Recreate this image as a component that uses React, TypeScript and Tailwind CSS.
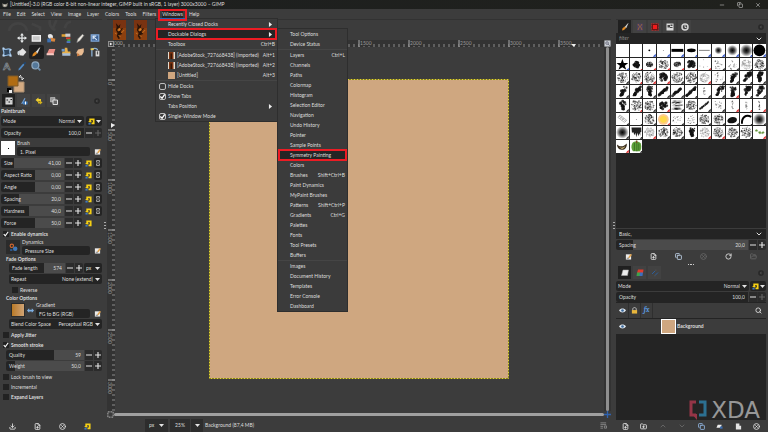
import { useState } from 'react';
import type { ReactNode } from 'react';
import {
  ChevronDown,
  ChevronUp,
  Copy,
  Download,
  FilePlus,
  FolderOpen,
  FolderPlus,
  Minus,
  RotateCw,
  Search,
  X,
  CircleX,
} from 'lucide-react';

interface ChildrenProps {
  children: ReactNode;
  className?: string;
}

function Icon({ children, className = 'size-[10px]' }: ChildrenProps) {
  return (
    <svg viewBox="0 0 16 16" className={`shrink-0 ${className}`} fill="none" aria-hidden="true">
      {children}
    </svg>
  );
}

function Caret() {
  return (
    <Icon className="size-[5px] pointer-events-none">
      <path d="M0 3h16l-8 10z" fill="#e4e4e4" />
    </Icon>
  );
}

function ResetIcon() {
  return (
    <Icon className="size-[7px]">
      <path d="M3 8V1h12v13H8v-4h3V5H7v3z" fill="#f5cf14" />
      <path d="M0 7h9l-4 4z" fill="#f5cf14" />
      <path d="M1 11h5v4H1z" fill="#3f78c0" />
    </Icon>
  );
}

function EditIcon() {
  return (
    <Icon className="size-[7px]">
      <path d="M2 3h12v12H2z" fill="#ececec" />
      <path d="M7 10l6-8 3 2-6 8z" fill="#e3a34a" />
      <path d="M4 12h5" stroke="#777" strokeWidth="2" />
    </Icon>
  );
}

function LinkIcon() {
  return (
    <Icon className="size-[8px]">
      <path d="M5 7V3h6v4M5 9v4h6V9M8 5v6" stroke="#9c9c9c" strokeWidth="2" />
    </Icon>
  );
}

function BrushIcon() {
  return (
    <>
      <path d="M14 1L8 8l2 2z" fill="#f3efe6" stroke="#ddd" />
      <path d="M7 7l3 3-4 4-4 1 1-4z" fill="#e08a24" />
    </>
  );
}

const tools: { name: string; art: ReactNode }[] = [
  { name: 'Pointer', art: null },
  {
    name: 'Move',
    art: (
      <path
        d="M8 0l3 4H9v3h3V5l4 3-4 3V9H9v3h2l-3 4-3-4h2V9H4v2L0 8l4-3v2h3V4H5z"
        fill="#e6e9ea"
      />
    ),
  },
  {
    name: 'Rectangle Select',
    art: <path d="M2 4h13v9H2z" fill="#c9c9c9" stroke="#f1f1f1" strokeWidth="2" />,
  },
  {
    name: 'Free Select',
    art: (
      <>
        <path d="M3 3c4-3 9 0 8 4S2 10 3 3z" fill="#e8e8e8" />
        <path d="M7 7l8 2-1 5-6-1z" fill="#d9863d" />
        <path d="M2 9h6v6H2z" fill="#3d70b0" />
      </>
    ),
  },
  {
    name: 'Fuzzy Select',
    art: (
      <>
        <path d="M1 2h9v4H1z" fill="#e0a030" />
        <path d="M7 1h8v5H7z" fill="#ccc" />
        <path d="M8 7h7v3H8z" fill="#d43c2c" />
        <path d="M10 10h5v3h-5z" fill="#46a046" />
        <path d="M9 13h6v3H9z" fill="#4d78c4" />
      </>
    ),
  },
  {
    name: 'Crop',
    art: <path d="M3 15l2-6 7-7 2 2-6 8z" fill="#eeeae0" stroke="#999" />,
  },
  {
    name: 'Transform',
    art: (
      <>
        <path d="M2 3h12v10H2z" fill="#3b5f91" stroke="#7ea6d8" strokeWidth="2" />
        <path d="M4 5l7 6M5 10V5h5" stroke="#d8e6f6" strokeWidth="2" />
      </>
    ),
  },
  {
    name: 'Warp',
    art: (
      <>
        <path d="M2 2c4 5 8-2 12 2-4 4 0 6 0 10-4-4-8 2-12-1 3-4-1-7 0-11z" fill="#31465c" stroke="#8bb4dc" strokeWidth="2" />
        <path d="M1 1h3v3H1zM12 3h3v3h-3zM1 12h3v3H1zM12 12h3v3h-3z" fill="#bed6ee" />
      </>
    ),
  },
  {
    name: 'Bucket Fill',
    art: (
      <>
        <path d="M3 7l6-5 6 6-5 6-6-1z" fill="#e4e4e4" />
        <path d="M1 7l4-2-2 8c-2 0-3-3-2-6z" fill="#cfd7de" />
      </>
    ),
  },
  { name: 'Paintbrush', art: <BrushIcon /> },
  {
    name: 'Eraser',
    art: (
      <>
        <path d="M5 3h10l-3 9H1z" fill="#eb8e86" />
        <path d="M1 10h11l1 3H1z" fill="#f7cbc4" />
      </>
    ),
  },
  {
    name: 'Clone',
    art: (
      <>
        <path d="M6 1h4l1 6h4v4H2V7h4z" fill="#e6b04c" />
        <path d="M2 10h13v4H2z" fill="#a9bfd8" />
        <path d="M1 3h5v4H1z" fill="#6d98c8" />
      </>
    ),
  },
  {
    name: 'Smudge',
    art: (
      <>
        <path d="M14 2L5 4 2 9l3 5 6-1 3-5z" fill="#e9bc92" />
        <path d="M4 9l4 4-5 2z" fill="#c9783c" />
      </>
    ),
  },
  {
    name: 'Paths',
    art: (
      <>
        <path d="M3 15V5c0-4 9-4 9 0" stroke="#8cb2d8" strokeWidth="2" />
        <path d="M9 6h6v9H9z" fill="#ddd" />
        <path d="M11 7h2v5h-2z" fill="#555" />
        <path d="M1 2h5v3H1z" fill="#e8cc5b" />
      </>
    ),
  },
  {
    name: 'Text',
    art: (
      <text x="2" y="14" fontSize="16" fontWeight="700" fill="#23282d" stroke="#9aa0a6">
        A
      </text>
    ),
  },
  {
    name: 'Color Picker',
    art: (
      <>
        <path d="M2 15l1-3 7-8 2 2-7 8z" fill="#5089c4" />
        <path d="M10 4l3-3 2 2-3 3z" fill="#20456e" />
      </>
    ),
  },
  {
    name: 'Zoom',
    art: (
      <>
        <circle cx="7" cy="7" r="5.5" fill="#54789a" stroke="#8faac2" strokeWidth="2" />
        <path d="M11 11l4 4" stroke="#6e8ca8" strokeWidth="3" />
      </>
    ),
  },
];

interface CheckProps {
  label: string;
  checked?: boolean;
  className?: string;
}

function Check({ label, checked = false, className = '' }: CheckProps) {
  const [on, setOn] = useState(checked);
  return (
    <label className={`flex h-[10px] items-center gap-0.5 ${className}`}>
      <span className="grid size-[6px]">
        <input
          type="checkbox"
          checked={on}
          onChange={e => setOn(e.target.checked)}
          className="col-start-1 row-start-1 size-[6px] appearance-none bg-[#222]"
        />
        {on && (
          <Icon className="col-start-1 row-start-1 size-[6px] pointer-events-none">
            <path d="M2 8l4 5 8-11" stroke="#fff" strokeWidth="3" />
          </Icon>
        )}
      </span>
      {label}
    </label>
  );
}

interface SpinProps {
  label: string;
  value: string;
  fill: number;
  maxed?: boolean;
}

function Spin({ label, value, fill, maxed }: SpinProps) {
  return (
    <div className="flex h-[10px] min-w-0 flex-1 overflow-hidden rounded-xs bg-[#2b2b2b]">
      <label className="relative flex min-w-0 flex-1 items-center bg-[#4b4b4b] px-[3px]">
        <span className="absolute inset-y-0 left-0 bg-[#242424]" style={{ width: `${fill}%` }} />
        <span className="relative whitespace-nowrap">{label}</span>
        <input
          defaultValue={value}
          className="relative w-full min-w-0 flex-1 bg-transparent text-right outline-none"
        />
      </label>
      <button
        type="button"
        aria-label={`Decrease ${label}`}
        className="grid w-[9px] place-items-center border-l border-[#3c3c3c]"
      >
        <Icon className="size-[6px]">
          <path d="M0 8h16" stroke="#e4e4e4" strokeWidth="3" />
        </Icon>
      </button>
      <button
        type="button"
        aria-label={`Increase ${label}`}
        disabled={maxed}
        className="grid w-[9px] place-items-center border-l border-[#3c3c3c] disabled:opacity-30"
      >
        <Icon className="size-[6px]">
          <path d="M0 8h16M8 0v16" stroke="#e4e4e4" strokeWidth="3" />
        </Icon>
      </button>
    </div>
  );
}

function Drop({ label, value }: { label: string; value: string }) {
  return (
    <label className="flex h-[10px] min-w-0 flex-1 items-center gap-0.5 rounded-xs bg-[#242424] px-0.5">
      <span className="whitespace-nowrap">{label}</span>
      <select className="min-w-0 flex-1 appearance-none bg-transparent outline-none [text-align-last:right]">
        <option>{value}</option>
      </select>
      <Caret />
    </label>
  );
}

function ResetMenu() {
  return (
    <button type="button" aria-label="Mode group" className="flex h-[10px] w-4 items-center justify-center gap-px rounded-xs bg-[#242424]">
      <ResetIcon />
      <Caret />
    </button>
  );
}

interface PickerProps {
  label: string;
  value: string;
  children: ReactNode;
  className?: string;
}

function Picker({ label, value, children, className = '' }: PickerProps) {
  return (
    <div className={`flex h-4 items-end gap-0.5 ${className}`}>
      {children}
      <label className="flex min-w-0 flex-1 flex-col">
        <span className="leading-[7px]">{label}</span>
        <input defaultValue={value} className="h-[9px] w-full rounded-xs bg-[#242424] px-[3px] outline-none" />
      </label>
      <button type="button" aria-label={`Edit ${label}`} className="grid h-[9px] w-[10px] place-items-center">
        <EditIcon />
      </button>
    </div>
  );
}

interface DockTab {
  name: string;
  art: ReactNode;
}

function DockTabs({ tabs }: { tabs: DockTab[] }) {
  return (
    <div role="tablist" className="flex h-[13px] shrink-0 items-center gap-0.5 px-0.5">
      {tabs.map((tab, i) => (
        <button
          key={tab.name}
          type="button"
          role="tab"
          aria-label={tab.name}
          aria-selected={i === 0}
          className={`grid h-[13px] w-[13px] place-items-center ${i === 0 ? 'bg-[#202020]' : 'bg-[#424242]'}`}
        >
          <Icon className="size-[8px]">{tab.art}</Icon>
        </button>
      ))}
      <button type="button" aria-label="Configure tab" className="ml-auto">
        <Icon className="size-[6px]">
          <circle cx="8" cy="8" r="7" fill="#2c2c2c" stroke="#242424" />
          <path d="M9 4L5 8l4 4z" fill="#555" />
        </Icon>
      </button>
    </div>
  );
}

const optionTabs: DockTab[] = [
  {
    name: 'Tool Options',
    art: (
      <>
        <path d="M1 1h14v14H1z" fill="#e8e8e8" />
        <path d="M4 3v10M8 3v10M12 3v10" stroke="#777" strokeWidth="1" />
        <path d="M3 5h3v2H3zM7 9h3v2H7zM11 4h3v2h-3z" fill="#222" />
      </>
    ),
  },
  {
    name: 'Device Status',
    art: (
      <>
        <path d="M2 14L9 2l2 1-5 10z" fill="#6f9cd0" />
        <path d="M6 9h9v6H6z" fill="#437ec0" />
        <path d="M11 9v6" stroke="#fff" strokeWidth="2" />
      </>
    ),
  },
  {
    name: 'Undo History',
    art: (
      <>
        <path d="M1 6l6-5v3h5v4H7v3z" fill="#f0cf2f" />
        <path d="M15 11l-5-4v2H6v4h4v2z" fill="#d5b31c" />
      </>
    ),
  },
  {
    name: 'Images',
    art: (
      <>
        <path d="M1 1h9v9H1z" fill="#999" stroke="#ddd" />
        <path d="M6 6h9v9H6z" fill="#666" stroke="#ddd" strokeWidth="2" />
      </>
    ),
  },
];

const brushTabs: DockTab[] = [
  { name: 'Brushes', art: <BrushIcon /> },
  {
    name: 'Patterns',
    art: (
      <>
        <path d="M2 1h12v14H2z" fill="#4b3f5c" />
        <path d="M4 2l3 5-3 7M12 2L9 7l3 7" stroke="#93653f" strokeWidth="2" />
      </>
    ),
  },
  {
    name: 'Gradients',
    art: (
      <>
        <path d="M1 1h14v14H1z" fill="#6b1414" stroke="#d43a3a" strokeDasharray="2 1" />
        <path d="M4 4h8v8H4z" fill="#ef1c1c" />
      </>
    ),
  },
  {
    name: 'Fonts',
    art: (
      <>
        <path d="M1 1h14v14H1z" fill="#dcdcdc" />
        <path d="M3 4h5v5H3zM8 8h5v2H8zM9 3h4v3H9z" fill="#444" />
      </>
    ),
  },
  {
    name: 'Document History',
    art: (
      <>
        <circle cx="8" cy="8" r="6" stroke="#d6d6d6" strokeWidth="3" />
        <path d="M8 4v5h3" stroke="#d6d6d6" strokeWidth="2" />
      </>
    ),
  },
];

const layerTabs: DockTab[] = [
  { name: 'Layers', art: <path d="M4 2h11l-2 11H1z" fill="#ececec" stroke="#aaa" /> },
  {
    name: 'Channels',
    art: (
      <>
        <path d="M4 1h11l-1 7H2z" fill="#e03a2c" />
        <path d="M2 7h7l-1 7H1z" fill="#3da34a" />
        <path d="M8 7h6l-1 7H7z" fill="#3c6fc0" />
      </>
    ),
  },
  {
    name: 'Paths',
    art: (
      <>
        <path d="M2 10L9 3M7 14l7-7" stroke="#2c5f9c" strokeWidth="2" />
        <path d="M8 1h3v3H8zM6 12h3v3H6z" fill="#4b4b4b" />
      </>
    ),
  },
];

/* ---------- brush grid ---------- */

// one letter per brush preview, one row per string
const brushRows = [
  '..oi-elpqPC',
  '*bctcBfssgt',
  'TtTBTTgsVVV',
  'VVVDDDyVVVV',
  'VTtBLtdsyyy',
  'Hit@sstt%aS',
  'SrgttVgttTm',
  'nG',
];

const cornerRows = [
  '..BBBBBBBBB',
  'BRRRRRRKKKK',
  'KRRRKKRKKKK',
  'KKKKKKKKRKK',
  'KRKRKKKKRRR',
  'KKKRKKKKKKK',
  'KKRKKKRRKKR',
  'RK',
];

function seeded(seed: number) {
  let s = seed * 7919 + 13;
  return () => {
    s = (s + 0x6d2b79f5) | 0;
    let t = Math.imul(s ^ (s >>> 15), 1 | s);
    t = (t + Math.imul(t ^ (t >>> 7), 61 | t)) ^ t;
    return ((t ^ (t >>> 14)) >>> 0) / 4294967296;
  };
}

function specks(kind: string, seed: number): ReactNode {
  const rnd = seeded(seed);
  const out: ReactNode[] = [];
  const solid = 'bBVD'.includes(kind);
  const flat = kind === 'L';
  const count = kind === 'f' ? 4 : kind === 's' ? 18 : kind === 'y' ? 16 : solid ? 30 : 110;
  for (let i = 0; i < count; i++) {
    const angle = rnd() * Math.PI * 2;
    const dist = Math.sqrt(rnd());
    const reach = kind === 'T' ? 11 : kind === 'b' ? 6 : kind === 'B' ? 8 : kind === 'c' ? 7 : 10;
    let x = 13 + Math.cos(angle) * dist * reach;
    let y = 13 + Math.sin(angle) * dist * (kind === 'c' ? 5 : reach);
    let r = 0.6 + rnd() * 0.8;
    if (solid) r = 1.2 + rnd() * 2;
    if (kind === 'V') {
      y = 3 + rnd() * 19;
      x = 14 + (rnd() - 0.5) * (y < 13 ? 11 : 4) - (y - 13) * (seed % 3) * 0.3;
    }
    if (kind === 'y') {
      y = 4 + rnd() * 18;
      x = 13 + (rnd() - 0.5) * 3;
    }
    if (kind === 'D' || kind === 'd') {
      const t = rnd();
      x = 3 + t * 19;
      y = 21 - t * 15 + (rnd() - 0.5) * 4;
    }
    if (flat) y = 4 + Math.floor(rnd() * 8) * 2.5;
    out.push(
      <ellipse
        key={i}
        cx={x}
        cy={y}
        rx={flat ? 3 : r}
        ry={flat ? 0.5 : r}
        fill="#111"
        opacity={kind === 'g' ? 0.2 : solid ? 0.8 : 0.5}
      />,
    );
  }
  return out;
}

function preview(kind: string, seed: number): ReactNode {
  switch (kind) {
    case '.':
      return null;
    case 'o':
      return <circle cx="13" cy="13" r="2" fill="#000" />;
    case 'i':
      return <circle cx="13" cy="13" r="1" fill="#333" />;
    case '-':
      return <path d="M1 10h24v6H1z" fill="#000" />;
    case 'e':
      return <ellipse cx="13" cy="13" rx="9" ry="4" fill="#000" />;
    case 'l':
      return <path d="M2 13h22" stroke="#000" />;
    case 'p':
      return <circle cx="13" cy="13" r="8" fill="url(#soft)" />;
    case 'q':
      return <circle cx="13" cy="13" r="11" fill="url(#soft)" />;
    case 'P':
    case 'S':
      return <circle cx="13" cy="13" r="13" fill="url(#soft)" />;
    case 'C':
      return <circle cx="13" cy="13" r="12" fill="#000" />;
    case '*':
      return <path d="M13 2l3 8 9 0-7 6 3 8-8-5-8 5 3-8-7-6 9 0z" fill="#000" />;
    case 'H':
      return (
        <path
          d="M4 9l13 10M6 6l14 11M8 4l14 11M4 9l4-5M8 12l4-5M12 15l4-5M17 19l5-4"
          stroke="#777"
          strokeWidth="1"
        />
      );
    case '@':
      return (
        <>
          <circle cx="13" cy="13" r="11" fill="#ffb35c" opacity="0.7" />
          <circle cx="13" cy="13" r="7" fill="#ffd84a" />
        </>
      );
    case '%':
      return <path d="M3 15c2-7 12-9 18-5 5 7-5 12-12 11-5 0-7-3-6-6z" fill="#111" />;
    case 'a':
      return <path d="M4 22C3 9 12 2 23 8" stroke="#000" strokeWidth="4" />;
    case 'r':
      return <path d="M3 3h20v9l-2 1v7l-2-5-2 6-2-7-2 9-2-9-2 5-2-6-3 1z" fill="#222" />;
    case 'm':
      return (
        <path
          d="M4 9l4-2 2 3-4 1zM11 12l4-1 2 4-4 1zM17 14l4-3 2 3-4 2z"
          fill="#5b8f32"
          stroke="#86ad62"
        />
      );
    case 'n':
      return (
        <>
          <path d="M2 9c6 5 12 6 20-2 1 8-4 14-11 13-6-1-9-6-9-11z" fill="#3b2f1f" />
          <path d="M6 14c4 3 9 3 13-2-1 5-5 7-8 6z" fill="#d8c48a" />
        </>
      );
    case 'G':
      return (
        <>
          <path d="M5 6c4-4 13-4 17 1 2 7 1 13-2 16H6C2 18 2 11 5 6z" fill="#5fa03a" />
          <path d="M9 6v16M14 5v18M18 7v14" stroke="#3c7424" strokeWidth="2" />
          <path d="M12 1h3v5h-3z" fill="#7a4a24" />
        </>
      );
    default:
      return specks(kind, seed);
  }
}

const cornerFill: Record<string, string> = { B: '#2b50c8', R: '#d81e1e', K: '#222' };

function BrushGrid() {
  return (
    <>
      <svg className="absolute size-0" aria-hidden="true">
        <radialGradient id="soft">
          <stop offset="0" stopColor="#000" />
          <stop offset="0.4" stopColor="#000" stopOpacity="0.75" />
          <stop offset="1" stopColor="#000" stopOpacity="0" />
        </radialGradient>
      </svg>
      <div className="grid grid-cols-11 gap-px">
        {brushRows.flatMap((row, r) =>
          row.split('').map((kind, c) => {
            const corner = cornerRows[r][c];
            return (
              <button
                key={`${r}-${c}`}
                type="button"
                aria-label={`Brush ${r * 11 + c + 1}`}
                className="aspect-square bg-white"
              >
                <svg viewBox="0 0 26 26" fill="none" className="size-full">
                  {preview(kind, r * 11 + c + 1)}
                  {corner !== '.' && <path d="M26 20v6h-6z" fill={cornerFill[corner]} />}
                </svg>
              </button>
            );
          }),
        )}
      </div>
    </>
  );
}

/* ---------- menus ---------- */

const menus = ['File', 'Edit', 'Select', 'View', 'Image', 'Layer', 'Colors', 'Tools', 'Filters', 'Windows', 'Help'];

const dialogs: [string, string?][][] = [
  [['Tool Options'], ['Device Status']],
  [
    ['Layers', 'Ctrl+L'],
    ['Channels'],
    ['Paths'],
    ['Colormap'],
    ['Histogram'],
    ['Selection Editor'],
    ['Navigation'],
    ['Undo History'],
    ['Pointer'],
    ['Sample Points'],
    ['Symmetry Painting'],
    ['Colors'],
    ['Brushes', 'Shift+Ctrl+B'],
    ['Paint Dynamics'],
    ['MyPaint Brushes'],
    ['Patterns', 'Shift+Ctrl+P'],
    ['Gradients', 'Ctrl+G'],
    ['Palettes'],
    ['Fonts'],
    ['Tool Presets'],
    ['Buffers'],
  ],
  [['Images'], ['Document History'], ['Templates'], ['Error Console'], ['Dashboard']],
];

interface ItemProps {
  label: string;
  hint?: string;
  submenu?: boolean;
  marked?: boolean;
  art?: ReactNode;
}

function MenuItem({ label, hint, submenu, marked, art }: ItemProps) {
  return (
    <button
      type="button"
      role="menuitem"
      className={`relative flex h-[10px] w-full items-center gap-0.5 pl-3 pr-0.5 ${marked ? 'bg-[#242424]' : ''}`}
    >
      {art}
      <span className="whitespace-nowrap">{label}</span>
      <span className="ml-auto whitespace-nowrap">{hint}</span>
      {submenu && (
        <Icon className="mr-0.5 size-[5px]">
          <path d="M3 0v16l10-8z" fill="#eee" />
        </Icon>
      )}
      {marked && <span className="absolute -inset-y-px inset-x-0 border-2 border-[#ec1c24]" />}
    </button>
  );
}

function MenuCheck({ label, checked = false }: CheckProps) {
  const [on, setOn] = useState(checked);
  return (
    <label className="flex h-[10px] items-center gap-0.5 pl-[3px]">
      <span className="grid size-[7px]">
        <input
          type="checkbox"
          checked={on}
          onChange={e => setOn(e.target.checked)}
          className="col-start-1 row-start-1 size-[7px] appearance-none rounded-xs border border-[#bdbdbd]"
        />
        {on && (
          <Icon className="col-start-1 row-start-1 size-[7px] pointer-events-none">
            <path d="M3 8l4 4 6-9" stroke="#fff" strokeWidth="3" />
          </Icon>
        )}
      </span>
      {label}
    </label>
  );
}

function Autumn({ className }: { className: string }) {
  return (
    <svg viewBox="0 0 14 20" preserveAspectRatio="none" className={`shrink-0 ${className}`} aria-hidden="true">
      <path d="M0 0h14v20H0z" fill="#7a3311" />
      <path d="M0 8h14v12H0z" fill="#8d400f" />
      <path d="M3 3l3 3 2-2-1 5 4-1-3 4 2 2-3 1v4H6l-2-3 1-3-2-3 1-3z" fill="#2a1408" />
      <path d="M5 10l2-2 1 2-2 1zM9 13l3-3M2 13l2 1M6 15l2 2" fill="#d98a3a" stroke="#c5701f" />
    </svg>
  );
}

function ImportedArt() {
  return (
    <svg viewBox="0 0 14 14" className="size-[7px] shrink-0" aria-hidden="true">
      <path d="M0 0h14v14H0z" fill="#e3dccf" />
      <path d="M2 0h9v14H2z" fill="#7a3311" />
      <path d="M5 3h3v11H5z" fill="#331709" />
    </svg>
  );
}

function WindowsMenu() {
  return (
    <div role="menu" className="absolute left-[155px] top-[18px] w-[123px] border border-[#2e2e2e] bg-[#3b3b3b]">
      <MenuItem label="Recently Closed Docks" submenu />
      <MenuItem label="Dockable Dialogs" submenu marked />
      <MenuItem label="Toolbox" hint="Ctrl+B" />
      <div className="border-y border-[#454545]">
        <MenuItem label="[AdobeStock_727668438] (imported)" hint="Alt+1" art={<ImportedArt />} />
        <MenuItem label="[AdobeStock_727668438] (imported)" hint="Alt+2" art={<ImportedArt />} />
        <MenuItem label="[Untitled]" hint="Alt+3" art={<span className="size-[7px] bg-[#cfa67f]" />} />
      </div>
      <MenuCheck label="Hide Docks" />
      <MenuCheck label="Show Tabs" checked />
      <MenuItem label="Tabs Position" submenu />
      <MenuCheck label="Single-Window Mode" checked />
    </div>
  );
}

function DialogsMenu() {
  return (
    <div role="menu" className="absolute left-[277px] top-7 w-[71px] border border-[#2e2e2e] bg-[#3b3b3b]">
      {dialogs.map((group, i) => (
        <div key={i} className={i > 0 ? 'border-t border-[#454545]' : ''}>
          {group.map(([label, hint]) => (
            <MenuItem key={label} label={label} hint={hint} marked={label === 'Symmetry Painting'} />
          ))}
        </div>
      ))}
    </div>
  );
}

/* ---------- canvas ---------- */

function range(from: number, to: number) {
  return Array.from({ length: to - from + 1 }, (_, i) => from + i);
}

function TopRuler() {
  return (
    <svg className="h-[7px] min-w-0 flex-1 bg-[#333]" aria-hidden="true">
      {range(0, 97).map(i => (
        <path key={i} d={`M${i * 5} 4v3`} stroke="#8c8c8c" strokeWidth="1" />
      ))}
      <path d="M0 0h8v6H0z" fill="#333" />
      <text x="0" y="5" fontSize="5" fill="#aaa">
        000
      </text>
      {[1500, 2000, 2500, 3000, 3500].map(n => (
        <g key={n}>
          <path d={`M${95 + n / 10} 0h12v6h-12z`} fill="#333" />
          <path d={`M${95 + n / 10} 0v7`} stroke="#aaa" />
          <text x={96 + n / 10} y="5" fontSize="5" fill="#999">
            {n}
          </text>
        </g>
      ))}
      <path d="M457 4h5l-2 3z" fill="#eee" />
    </svg>
  );
}

function SideRuler() {
  return (
    <svg className="w-2 self-stretch bg-[#333]" aria-hidden="true">
      {range(0, 72).map(i => (
        <path key={i} d={`M5 ${i * 5 + 3}h3`} stroke="#8c8c8c" />
      ))}
      {[0, 500, 1000, 1500, 2000, 2500, 3000].map(n => (
        <g key={n}>
          <path d={`M1 ${33 + n / 10}h7`} stroke="#aaa" />
          <text transform={`translate(1 ${35 + n / 10}) rotate(90)`} fontSize="5" fill="#999">
            {n}
          </text>
        </g>
      ))}
      <path d="M4 76l4 2-4 3z" fill="#eee" />
    </svg>
  );
}

function Canvas() {
  return (
    <main className="flex min-w-0 flex-1 flex-col">
      <div className="flex h-[21px] shrink-0 gap-2 border-t border-[#323232] pl-[6px]">
        <button type="button" aria-label="First image">
          <Autumn className="h-5 w-[13px]" />
        </button>
        <button type="button" aria-label="Second image">
          <Autumn className="h-5 w-[13px]" />
        </button>
        <button type="button" aria-label="Untitled image" className="my-0.5 w-[13px] bg-[#cfa67f]" />
      </div>
      <div className="flex shrink-0">
        <span className="grid h-[7px] w-[7px] place-items-center">
          <Icon className="size-[6px]">
            <path d="M1 1h14v14H1z" stroke="#bbb" strokeWidth="2" />
            <path d="M5 4v8l7-4z" fill="#eee" />
          </Icon>
        </span>
        <TopRuler />
        <Icon className="size-[7px]">
          <path d="M1 1h14v14H1z" fill="#c9ced4" />
          <circle cx="7" cy="7" r="3" stroke="#667" strokeWidth="2" />
          <path d="M9 9l4 4" stroke="#667" strokeWidth="2" />
        </Icon>
      </div>
      <div className="flex min-h-0 flex-1">
        <SideRuler />
        <div className="flex min-w-0 flex-1 items-center justify-center pr-0.5">
          <svg className="size-[300px]" aria-hidden="true">
            <rect width="100%" height="100%" fill="#cfa780" />
            <rect x="0.5" y="0.5" width="299" height="299" fill="none" stroke="#2f2c18" />
            <rect
              x="0.5"
              y="0.5"
              width="299"
              height="299"
              fill="none"
              stroke="#e2d534"
              strokeDasharray="2 1"
            />
          </svg>
        </div>
        <div className="flex w-[7px] justify-center bg-[#333]">
          <span className="w-[3px] rounded-full bg-[#8f8f8f]" />
        </div>
      </div>
      <div className="flex h-[7px] shrink-0 items-center">
        <Icon className="size-[7px]">
          <path d="M2 2h12v12H2z" stroke="#bbb" strokeWidth="2" strokeDasharray="4 2" />
        </Icon>
        <span className="h-[3px] flex-1 rounded-full bg-[#a0a0a0]" />
        <Icon className="size-[7px]">
          <path d="M8 0v16M0 8h16" stroke="#2f62ae" strokeWidth="3" />
        </Icon>
      </div>
      <footer className="flex h-[14px] shrink-0 items-center gap-0.5 pl-[38px]">
        <label className="flex h-[13px] w-[23px] items-center bg-[#2d2d2d] px-1">
          <select aria-label="Unit" className="min-w-0 flex-1 appearance-none bg-transparent outline-none">
            <option>px</option>
          </select>
          <Caret />
        </label>
        <div className="flex h-[13px] w-[33px] items-center bg-[#2d2d2d]">
          <input aria-label="Zoom" defaultValue="25%" className="w-5 bg-transparent text-center outline-none" />
          <button type="button" aria-label="Zoom levels" className="grid h-full flex-1 place-items-center border-l border-[#3c3c3c]">
            <Caret />
          </button>
        </div>
        <span>Background (87,4 MB)</span>
        <Icon className="ml-auto mr-1 size-[7px]">
          <path d="M1 2h13M1 6h13M1 10h6M1 14h6M10 9h5v5h-5z" stroke="#8b8b8b" strokeWidth="2" />
        </Icon>
      </footer>
    </main>
  );
}

/* ---------- docks ---------- */

const sliders = [
  { label: 'Size', value: '41,00', fill: 20, linked: true },
  { label: 'Aspect Ratio', value: '0,00', fill: 54, linked: true },
  { label: 'Angle', value: '0,00', fill: 54, linked: true },
  { label: 'Spacing', value: '20,0', fill: 29, linked: true },
  { label: 'Hardness', value: '40,0', fill: 44, linked: true },
  { label: 'Force', value: '50,0', fill: 54, linked: false },
];

function ToolDock() {
  return (
    <aside className="flex w-[102px] shrink-0 flex-col">
      <svg className="h-3 w-full shrink-0 border-t border-[#323232]" viewBox="0 0 102 12" fill="none" aria-hidden="true">
        <path d="M5 12c3-11 17-11 20 0M30 4l9 4v5M50 0c-2 5 2 10 6 11M57 0l-4 9M66 9c2-7 5-7 7-7" stroke="#434343" strokeWidth="3" />
      </svg>
      <div className="grid h-[42px] shrink-0 grid-cols-7">
        {tools.map(tool => (
          <button
            key={tool.name}
            type="button"
            aria-label={tool.name}
            className={`grid h-[14px] place-items-center rounded-xs ${tool.name === 'Paintbrush' ? 'bg-[#1f1f1f]' : ''}`}
          >
            <Icon>{tool.art}</Icon>
          </button>
        ))}
      </div>
      <div className="mt-0.5 h-[19px] shrink-0 pl-[7px]">
        <svg viewBox="0 0 18 18" className="size-[18px]" aria-hidden="true">
          <path d="M7 7h10v10H7z" fill="#d3aa82" stroke="#a98d70" />
          <path d="M1 1h10v10H1z" fill="#b06c13" stroke="#7f5a2a" />
          <path d="M0 13h4v4H0z" fill="#000" />
          <path d="M2 15h3v3H2z" fill="#eee" />
          <path d="M12 2h3v3M12 2l2-2M15 5l2-2" stroke="#ddd" fill="none" />
        </svg>
      </div>
      <DockTabs tabs={optionTabs} />
      <section className="flex flex-col gap-0.5 pl-px">
        <h2 className="mt-px h-[6px] font-bold leading-[6px]">Paintbrush</h2>
        <div className="flex gap-0.5">
          <Drop label="Mode" value="Normal" />
          <ResetMenu />
        </div>
        <div className="flex">
          <Spin label="Opacity" value="100,0" fill={100} maxed />
        </div>
        <Picker label="Brush" value="1. Pixel">
          <button type="button" aria-label="Choose brush" className="grid size-[14px] place-items-center self-center bg-white">
            <span className="size-px bg-black" />
          </button>
        </Picker>
        {sliders.map(s => (
          <div key={s.label} className="flex gap-0.5">
            <Spin label={s.label} value={s.value} fill={s.fill} />
            <button type="button" aria-label={`Reset ${s.label}`} className="grid h-[10px] w-2 place-items-center">
              <ResetIcon />
            </button>
            <span className={`grid h-[10px] w-2 place-items-center ${s.linked ? 'rounded-xs bg-[#242424]' : ''}`}>
              {s.linked && <LinkIcon />}
            </span>
          </div>
        ))}
      </section>
      <section className="mt-px flex flex-col pl-[3px]">
        <Check label="Enable dynamics" checked className="font-bold" />
        <Picker label="Dynamics" value="Pressure Size" className="pl-[3px]">
          <button type="button" aria-label="Choose dynamics" className="grid size-[14px] place-items-center self-center bg-[#2b2b2b]">
            <Icon className="size-[9px]">
              <circle cx="5" cy="5" r="3" stroke="#d2672f" strokeWidth="2" />
              <circle cx="11" cy="10" r="4" fill="#4078b8" />
              <path d="M2 11h4v3H2z" fill="#2c5f9c" />
            </Icon>
          </button>
        </Picker>
        <h3 className="ml-[3px] h-2 font-bold leading-2">Fade Options</h3>
        <div className="ml-[6px] flex gap-px">
          <Spin label="Fade length" value="574" fill={63} />
          <label className="flex h-[10px] w-[18px] items-center rounded-xs bg-[#242424] px-0.5">
            <select aria-label="Fade unit" className="min-w-0 flex-1 appearance-none bg-transparent outline-none">
              <option>px</option>
            </select>
            <Caret />
          </label>
        </div>
        <div className="ml-[6px] mt-px flex">
          <Drop label="Repeat" value="None (extend)" />
        </div>
        <Check label="Reverse" className="ml-[9px] mt-px" />
        <h3 className="ml-[3px] h-[7px] font-bold leading-[7px]">Color Options</h3>
        <Picker label="Gradient" value="FG to BG (RGB)" className="pl-2">
          <button
            type="button"
            aria-label="Choose gradient"
            className="size-[14px] self-center border border-[#2b2b2b] bg-linear-to-r from-[#b97a24] to-[#d0a373]"
          />
          <Icon className="mb-1 size-[7px]">
            <path d="M0 8l5-5v3h6V3l5 5-5 5v-3H5v3z" fill="#7eb0e4" />
          </Icon>
        </Picker>
        <div className="ml-[6px] mt-px flex">
          <Drop label="Blend Color Space" value="Perceptual RGB" />
        </div>
        <Check label="Apply Jitter" className="mt-px font-bold" />
        <Check label="Smooth stroke" checked className="font-bold" />
        <div className="ml-[3px] flex flex-col gap-px">
          <div className="flex">
            <Spin label="Quality" value="59" fill={61} />
          </div>
          <div className="flex">
            <Spin label="Weight" value="50,0" fill={11} />
          </div>
        </div>
        <Check label="Lock brush to view" className="mt-px" />
        <Check label="Incremental" />
        <Check label="Expand Layers" className="font-bold" />
      </section>
      <footer className="mt-auto flex h-3 shrink-0 items-center gap-[18px] pl-[9px]">
        <button type="button" aria-label="Save preset"><Download size={7} strokeWidth={3} /></button>
        <button type="button" aria-label="Restore preset"><FilePlus size={7} strokeWidth={3} /></button>
        <button type="button" aria-label="Delete preset"><CircleX size={7} strokeWidth={3} /></button>
        <button type="button" aria-label="Reset"><ResetIcon /></button>
      </footer>
    </aside>
  );
}

function Splitter() {
  return (
    <div className="grid w-[5px] shrink-0 place-items-center">
      <svg viewBox="0 0 2 8" className="h-2 w-0.5" aria-hidden="true">
        <path d="M0 0h2v1H0zM0 3h2v1H0zM0 6h2v1H0z" fill="#aaa" />
      </svg>
    </div>
  );
}

function Eye() {
  return (
    <Icon className="size-[7px]">
      <path d="M0 8c4-6 12-6 16 0-4 6-12 6-16 0z" fill="#dfe7ef" />
      <circle cx="8" cy="8" r="3" fill="#3d6a9c" />
    </Icon>
  );
}

function RightDock() {
  return (
    <aside className="flex w-[152px] shrink-0 flex-col border-t border-[#323232] pr-0.5">
      <DockTabs tabs={brushTabs} />
      <label className="flex h-[11px] shrink-0 items-center bg-[#242424] px-[3px]">
        <input
          aria-label="Filter brushes"
          placeholder="filter"
          className="min-w-0 flex-1 bg-transparent italic outline-none placeholder:text-[#8b8b8b]"
        />
        <ChevronDown size={8} strokeWidth={3} />
      </label>
      <div className="min-h-0 flex-[184] overflow-hidden bg-[#242424]">
        <BrushGrid />
      </div>
      <label className="mt-px flex h-[10px] shrink-0 items-center bg-[#242424] px-[3px]">
        <select aria-label="Brush tags" className="min-w-0 flex-1 appearance-none bg-transparent outline-none">
          <option>Basic,</option>
        </select>
        <ChevronDown size={8} strokeWidth={3} />
      </label>
      <div className="mt-px flex shrink-0">
        <Spin label="Spacing" value="20,0" fill={13} />
      </div>
      <div className="flex h-3 shrink-0 items-center justify-between px-[9px]">
        <button type="button" aria-label="Edit brush"><EditIcon /></button>
        <button type="button" aria-label="New brush"><FilePlus size={7} strokeWidth={3} /></button>
        <button type="button" aria-label="Duplicate brush"><Copy size={7} strokeWidth={3} color="#b9cbe0" /></button>
        <button type="button" aria-label="Delete brush"><CircleX size={7} strokeWidth={3} color="#666" /></button>
        <button type="button" aria-label="Refresh brushes"><RotateCw size={7} strokeWidth={3} /></button>
        <button type="button" aria-label="Open brush as image"><FolderOpen size={7} strokeWidth={3} color="#666" /></button>
      </div>
      <div className="grid h-1 shrink-0 place-items-center">
        <svg viewBox="0 0 6 1" className="h-px w-[6px]" aria-hidden="true">
          <path d="M0 0h1v1H0zM2 0h2v1H2zM5 0h1v1H5z" fill="#ccc" />
        </svg>
      </div>
      <DockTabs tabs={layerTabs} />
      <div className="mt-0.5 flex shrink-0 gap-px">
        <Drop label="Mode" value="Normal" />
        <ResetMenu />
      </div>
      <div className="mt-px flex shrink-0">
        <Spin label="Opacity" value="100,0" fill={100} maxed />
      </div>
      <div className="flex min-h-0 flex-[118] flex-col bg-[#242424]">
        <div className="mt-px flex h-[15px] shrink-0 items-center bg-[#3c3c3c]">
          <span className="grid h-full w-[13px] place-items-center border-r border-[#2f2f2f]"><Eye /></span>
          <span className="grid h-full w-3 place-items-center border-r border-[#2f2f2f]">
            <Icon className="size-[7px]">
              <path d="M4 8V5c0-5 8-5 8 0v3" stroke="#ccc" strokeWidth="2" />
              <path d="M2 7h12v8H2z" fill="#e8b63c" />
            </Icon>
          </span>
          <span className="grid h-full w-3 place-items-center border-r border-[#2f2f2f] font-serif text-[7px] font-bold italic text-[#5b9be0]">fx</span>
          <button type="button" aria-label="Search layers" className="ml-auto mr-1"><Search size={7} strokeWidth={3} /></button>
        </div>
        <div className="mt-px flex h-[15px] shrink-0 items-center bg-[#3c3c3c] font-bold">
          <span className="grid w-[13px] place-items-center"><Eye /></span>
          <span className="ml-8 mr-px size-[15px] border border-white bg-[#cfa780]" />
          Background
        </div>
      </div>
      <footer className="flex h-3 shrink-0 items-center justify-between px-1.5">
        <button type="button" aria-label="New layer"><FilePlus size={7} strokeWidth={3} /></button>
        <button type="button" aria-label="New layer group"><FolderPlus size={7} strokeWidth={3} /></button>
        <button type="button" aria-label="Raise layer"><ChevronUp size={8} strokeWidth={2} color="#777" /></button>
        <button type="button" aria-label="Lower layer"><ChevronDown size={8} strokeWidth={2} color="#777" /></button>
        <button type="button" aria-label="Duplicate layer"><Copy size={7} strokeWidth={3} color="#8fb4de" /></button>
        <button type="button" aria-label="Merge layer">
          <Icon className="size-[7px]">
            <path d="M4 4h9l-2 7H1z" fill="#eee" />
            <path d="M9 8h6v5H9z" fill="#3b6cae" />
          </Icon>
        </button>
        <button type="button" aria-label="Add mask">
          <Icon className="size-[7px]">
            <path d="M2 1h8v5h4v9H2z" fill="#e4e4e4" />
          </Icon>
        </button>
        <button type="button" aria-label="Delete layer"><CircleX size={7} strokeWidth={3} /></button>
      </footer>
    </aside>
  );
}

function Watermark() {
  return (
    <div className="absolute bottom-3 right-2 flex items-center gap-1 opacity-80">
      <svg viewBox="0 0 18 21" className="h-[21px] w-[18px]" fill="none" aria-hidden="true">
        <path d="M7 3H2v13h5" stroke="#b23a50" strokeWidth="3" />
        <path d="M3 15h5v6z" fill="#b23a50" />
        <path d="M10 3h6v13h-6" stroke="#2f83ad" strokeWidth="3" />
      </svg>
      <span className="font-['DejaVu_Sans',sans-serif] text-[23px] leading-5 text-[#b4b4b4]">XDA</span>
    </div>
  );
}

export default function App() {
  return (
    <div className="relative flex h-screen flex-col overflow-hidden bg-[#3c3c3c] font-[Lato,sans-serif] text-[5px] leading-[7px] text-[#dedede]">
      <header className="flex h-[9px] shrink-0 items-center gap-0.5 bg-linear-to-r from-[#1d1f1f] to-[#20211d] pl-0.5 pr-[7px]">
        <Icon className="size-[6px]">
          <path d="M1 3l4 3h6l4-4-1 9-6 3-6-2z" fill="#a5a094" />
          <path d="M6 7h3v3H6z" fill="#fff" />
        </Icon>
        <h1 className="flex-1 whitespace-nowrap">
          [Untitled]-3.0 (RGB color 8-bit non-linear integer, GIMP built in sRGB, 1 layer) 3000x3000 – GIMP
        </h1>
        <div className="flex gap-3">
          <button type="button" aria-label="Minimize"><Minus size={6} /></button>
          <button type="button" aria-label="Restore"><Copy size={6} /></button>
          <button type="button" aria-label="Close"><X size={6} /></button>
        </div>
      </header>
      <nav className="flex h-[10px] shrink-0 items-center gap-[6px] pl-[3px]">
        {menus.map(name => (
          <button
            key={name}
            type="button"
            className={name === 'Windows' ? 'relative h-full bg-[#242424]' : 'h-full'}
          >
            {name}
            {name === 'Windows' && (
              <span className="absolute -inset-x-1 -bottom-0.5 top-0 z-10 border-2 border-[#ec1c24]">
                <span className="block h-full border-b border-[#2a62b4]" />
              </span>
            )}
          </button>
        ))}
      </nav>
      <div className="flex min-h-0 flex-1">
        <ToolDock />
        <Splitter />
        <Canvas />
        <Splitter />
        <RightDock />
      </div>
      <WindowsMenu />
      <DialogsMenu />
      <Watermark />
    </div>
  );
}
